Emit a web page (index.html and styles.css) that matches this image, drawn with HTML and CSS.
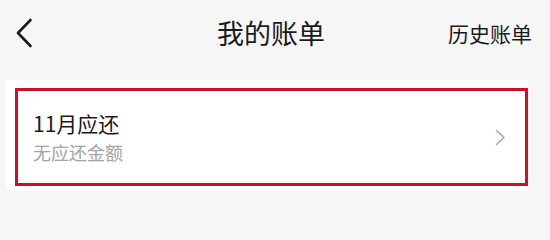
FILE: index.html
```html
<!DOCTYPE html>
<html lang="zh">
<head>
<meta charset="utf-8">
<link rel="stylesheet" href="styles.css">
</head>
<body>
<div class="page">
  <header class="nav">
    <div class="nav-left">
      <svg class="back" width="18" height="30" viewBox="0 0 18 30"><path d="M15.5 2 L3 15 L15.5 28" fill="none" stroke="#1a1a1a" stroke-width="2.6" stroke-linecap="round" stroke-linejoin="round"/></svg>
    </div>
    <div class="nav-title">我的账单</div>
    <div class="nav-right">历史账单</div>
  </header>
  <section class="card">
    <div class="highlight">
      <div class="bill">
        <div class="bill-text">
          <div class="bill-title">11月应还</div>
          <div class="bill-sub">无应还金额</div>
        </div>
        <svg class="arrow" width="11" height="17" viewBox="0 0 11 17"><path d="M1.5 1.5 L9 8.5 L1.5 15.5" fill="none" stroke="#a8a8a8" stroke-width="1.6" stroke-linecap="round" stroke-linejoin="round"/></svg>
      </div>
    </div>
  </section>
</div>
</body>
</html>
```
FILE: styles.css
```css
html, body {
  margin: 0;
  padding: 0;
  background: #f6f6f6;
}
body {
  width: 550px;
  height: 201px;
  overflow: hidden;
  font-family: "Noto Sans CJK SC", "Noto Sans", sans-serif;
}
.page {
  display: flex;
  flex-direction: column;
}
.nav {
  height: 64px;
  display: grid;
  grid-template-columns: 1fr auto 1fr;
  align-items: center;
  padding: 0 18px 0 15px;
}
.nav-left {
  display: flex;
  align-items: center;
}
.back {
  display: block;
  margin-top: 2px;
}
.nav-title {
  font-size: 27px;
  color: #1a1a1a;
  line-height: 1;
  margin-right: 5px;
}
.nav-right {
  justify-self: end;
  font-size: 21px;
  color: #1a1a1a;
  line-height: 1;
  margin-top: 2px;
}
.card {
  margin: 16px 22px 0 6px;
  background: #ffffff;
  padding: 8px 0 4px 9px;
  height: 110px;
  box-sizing: border-box;
}
.highlight {
  border: 3px solid #c9102c;
  height: 98px;
  box-sizing: border-box;
}
.bill {
  height: 100%;
  display: flex;
  align-items: center;
  justify-content: space-between;
  padding: 0 19px 0 15px;
}
.bill-text {
  display: flex;
  flex-direction: column;
  gap: 8px;
  margin-top: 0;
}
.bill-title {
  font-size: 21px;
  color: #1a1a1a;
  line-height: 1.1;
}
.bill-sub {
  font-size: 18px;
  color: #a3a3a3;
  line-height: 1.1;
}
.arrow {
  display: block;
}
```
